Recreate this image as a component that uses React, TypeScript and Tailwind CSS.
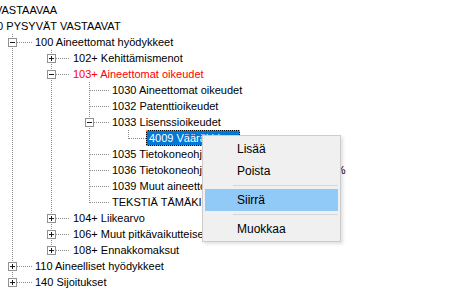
import React from "react";

type Row = {
  level: number;
  text: string;
  box?: "plus" | "minus";
  red?: boolean;
  selected?: boolean;
};

const ROWS: Row[] = [
  { level: 0, text: "VASTAAVAA" },
  { level: 1, text: "10 PYSYVÄT VASTAAVAT" },
  { level: 2, text: "100 Aineettomat hyödykkeet", box: "minus" },
  { level: 3, text: "102+ Kehittämismenot", box: "plus" },
  { level: 3, text: "103+ Aineettomat oikeudet", box: "minus", red: true },
  { level: 4, text: "1030 Aineettomat oikeudet" },
  { level: 4, text: "1032 Patenttioikeudet" },
  { level: 4, text: "1033 Lisenssioikeudet", box: "minus" },
  { level: 5, text: "4009 Vääräkirjaus", selected: true },
  { level: 4, text: "1035 Tietokoneohjelmistot" },
  { level: 4, text: "1036 Tietokoneohjelmistot, poistoprosentti 25 %" },
  { level: 4, text: "1039 Muut aineettomat oikeudet" },
  { level: 4, text: "TEKSTIÄ TÄMÄKIN ON" },
  { level: 3, text: "104+ Liikearvo", box: "plus" },
  { level: 3, text: "106+ Muut pitkävaikutteiset menot", box: "plus" },
  { level: 3, text: "108+ Ennakkomaksut", box: "plus" },
  { level: 2, text: "110 Aineelliset hyödykkeet", box: "plus" },
  { level: 2, text: "140 Sijoitukset", box: "plus" },
];

// indent cell widths per level, line sits at x=19 inside each cell
const CELL: Record<number, number> = { 2: 39, 3: 38, 4: 39, 5: 37 };
const LINE = "#8c8c8c";

function hasNext(i: number, level: number) {
  for (let j = i + 1; j < ROWS.length; j += 1) {
    if (ROWS[j].level < level) return false;
    if (ROWS[j].level === level) return true;
  }
  return false;
}

function Guide({ width, on }: { width: number; on: boolean }) {
  return (
    <svg width={width} height={16} className="block shrink-0">
      {on && (
        <line x1={19.5} y1={0} x2={19.5} y2={16} stroke={LINE} strokeDasharray="1 1" />
      )}
    </svg>
  );
}

function Elbow({ width, last, box }: { width: number; last: boolean; box?: "plus" | "minus" }) {
  return (
    <svg width={width} height={16} className="block shrink-0">
      <line x1={19.5} y1={0} x2={19.5} y2={last ? 9 : 16} stroke={LINE} strokeDasharray="1 1" />
      <line x1={box ? 24 : 20} y1={8.5} x2={width} y2={8.5} stroke={LINE} strokeDasharray="1 1" />
      {box && (
        <>
          <rect x={15.5} y={4.5} width={8} height={8} fill="#fff" stroke="#919191" />
          <line x1={17} y1={8.5} x2={22} y2={8.5} stroke="#1a1a1a" />
          {box === "plus" && <line x1={19.5} y1={6} x2={19.5} y2={11} stroke="#1a1a1a" />}
        </>
      )}
    </svg>
  );
}

function TreeRow({ row, index }: { row: Row; index: number }) {
  if (row.level < 2) {
    return (
      <div className={`flex h-4 ${row.level === 0 ? "ml-[-5px]" : "ml-[-9px]"}`}>
        <span className="h-4 whitespace-nowrap leading-4 text-black">{row.text}</span>
      </div>
    );
  }

  const guides = [];
  for (let k = 2; k < row.level; k += 1) {
    guides.push(<Guide key={k} width={CELL[k]} on={hasNext(index, k)} />);
  }

  return (
    <div className="ml-[-7px] flex h-4">
      {guides}
      <Elbow width={CELL[row.level]} last={!hasNext(index, row.level)} box={row.box} />
      {row.selected ? (
        <span className="h-4 whitespace-nowrap border border-dotted border-[#ff8728] bg-black">
          <span className="block h-[14px] bg-[#0078d7] pl-[2px] pr-[1px] leading-[14px] text-white">
            {row.text}
          </span>
        </span>
      ) : (
        <span
          className={`h-4 whitespace-nowrap pl-[3px] pr-[2px] leading-4 ${
            row.red ? "text-[#ff0000]" : "text-black"
          }`}
        >
          {row.text}
        </span>
      )}
    </div>
  );
}

function ContextMenu() {
  return (
    <div className="absolute left-[202px] top-[135px] w-[139px] border border-[#cccccc] bg-[#f0f0f0] pb-px pt-[2px] text-[12px] text-black shadow-[2px_2px_3px_rgba(0,0,0,0.12)]">
      <div className="mx-[2px] flex h-[22px] items-center pl-[32px]">Lisää</div>
      <div className="mx-[2px] flex h-[22px] items-center pl-[32px]">Poista</div>
      <div className="flex h-[7px] items-center pl-[30px] pr-[2px]">
        <div className="h-px w-full bg-[#d7d7d7]" />
      </div>
      <div className="mx-[2px] flex h-[22px] items-center bg-[#91c9f7] pl-[32px]">Siirrä</div>
      <div className="flex h-[7px] items-center pl-[30px] pr-[2px]">
        <div className="h-px w-full bg-[#d7d7d7]" />
      </div>
      <div className="mx-[2px] flex h-[22px] items-center pl-[32px]">Muokkaa</div>
    </div>
  );
}

export default function App() {
  return (
    <div className="relative h-[292px] w-[455px] overflow-hidden bg-white font-['Liberation_Sans',Arial,sans-serif] text-[11px]">
      <div className="flex flex-col pt-[2px]">
        {ROWS.map((row, i) => (
          <TreeRow key={i} row={row} index={i} />
        ))}
      </div>
      <ContextMenu />
    </div>
  );
}
